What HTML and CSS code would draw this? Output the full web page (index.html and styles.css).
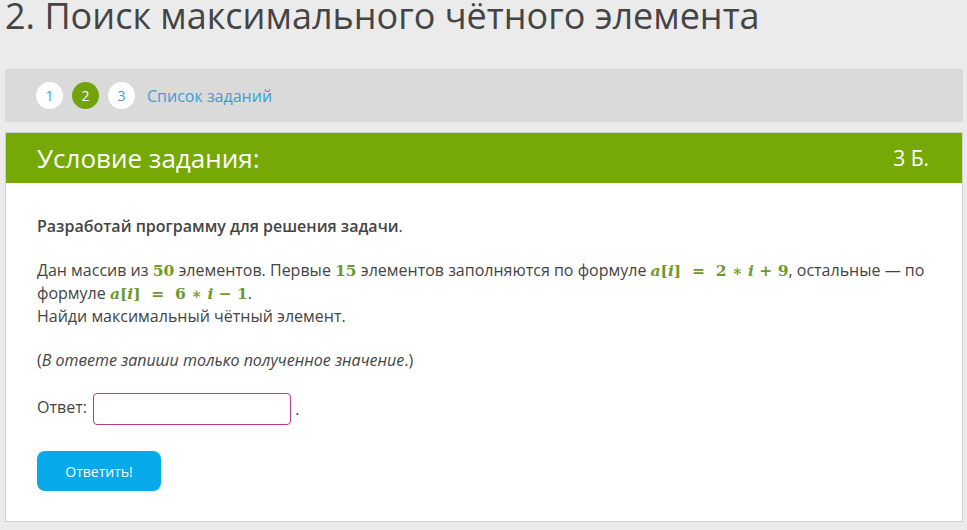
FILE: index.html
```html
<!DOCTYPE html>
<html lang="ru">

<head>
    <meta charset="utf-8">
    <meta name="viewport" content="width=device-width, initial-scale=1.0">
    <title>Поиск максимального чётного элемента</title>
    <link rel="stylesheet" href="styles.css">
</head>

<body>
    <h1 class="titel">2. Поиск максимального чётного элемента</h1>

    <nav class="trin">
        <a class="trin-nr" href="#">1</a>
        <a class="trin-nr aktiv" href="#">2</a>
        <a class="trin-nr" href="#">3</a>
        <a class="liste" href="#">Список заданий</a>
    </nav>

    <section class="opgave">
        <header class="opgave-top">
            <h2>Условие задания:</h2>
            <span class="point">3 Б.</span>
        </header>
        <div class="opgave-krop">
            <p><b>Разработай программу для решения задачи</b>.</p>
            <p>Дан массив из <span class="mat">50</span> элементов. Первые <span class="mat">15</span> элементов заполняются по формуле <span class="mat"><i>a</i>[<i>i</i>] &nbsp;=&nbsp; 2 ∗ <i>i</i> + 9</span>, остальные — по формуле <span class="mat"><i>a</i>[<i>i</i>] &nbsp;=&nbsp; 6 ∗ <i>i</i> − 1</span>.<br>Найди максимальный чётный элемент.</p>
            <p>(<em>В ответе запиши только полученное значение</em>.)</p>
            <form class="svar">
                <label>Ответ: <input type="text"></label>&nbsp;.
            </form>
            <button class="send" type="button">Ответить!</button>
        </div>
    </section>
</body></html>
```

FILE: styles.css
```css
/****GENERELT****/

body {
    background-color: #ebebeb;
    margin: 0;
    padding: 0 4px 0 5px;
    font-family: 'Open Sans', sans-serif;
    color: #444;
}

.titel {
    font-size: 36px;
    font-weight: normal;
    color: #444;
    margin: 0;
    line-height: 32px;
    height: 69px;
    white-space: nowrap;
}

/****NAVIGATION****/

.trin {
    background-color: #dadada;
    height: 53px;
    display: flex;
    align-items: center;
    padding-left: 31px;
    gap: 9px;
}

.trin-nr {
    width: 27px;
    height: 27px;
    border-radius: 50%;
    background-color: #fff;
    color: #3a9fd6;
    font-size: 14px;
    text-decoration: none;
    display: flex;
    align-items: center;
    justify-content: center;
}

.trin-nr.aktiv {
    background-color: #73a30a;
    color: #fff;
}

.liste {
    color: #3a9fd6;
    font-size: 16px;
    text-decoration: none;
    margin-left: 3px;
}

/****OPGAVE****/

.opgave {
    margin-top: 10px;
    background-color: #fff;
    border: 1px solid #cfcfcf;
    height: 388px;
}

.opgave-top {
    background-color: #76a806;
    color: #fff;
    height: 50px;
    display: flex;
    align-items: center;
    justify-content: space-between;
    padding: 0 33px 0 31px;
}

.opgave-top h2 {
    font-size: 26px;
    font-weight: normal;
    margin: 0;
}

.point {
    font-size: 21px;
}

.opgave-krop {
    padding: 32px 31px;
    font-size: 16px;
    line-height: 23px;
}

.opgave-krop p {
    margin: 0 0 21px 0;
}

.opgave-krop b {
    font-weight: 600;
}

.mat {
    font-family: 'DejaVu Serif', serif;
    font-weight: bold;
    color: #6c9a2c;
    font-size: 15.5px;
    line-height: 20px;
}

.mat i {
    font-style: italic;
}

.svar {
    margin-top: 15px;
    display: flex;
    align-items: center;
}

.svar input {
    width: 196px;
    height: 30px;
    border: 1px solid #b8388f;
    border-radius: 4px;
    margin-left: 2px;
    vertical-align: middle;
    padding: 0;
}

.send {
    margin-top: 26px;
    background-color: #07aae9;
    color: #fff;
    border: none;
    border-radius: 8px;
    width: 124px;
    height: 40px;
    font-family: 'Open Sans', sans-serif;
    font-size: 14px;
    cursor: pointer;
}
```
